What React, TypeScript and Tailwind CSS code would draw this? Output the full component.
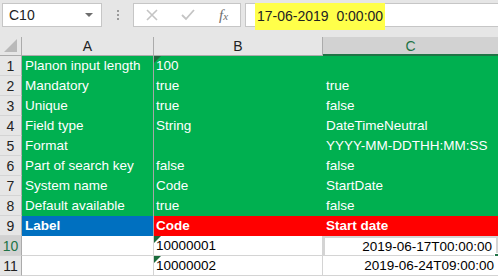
import React from "react";

const GREEN = "bg-[#00b050]";

type Row = { n: number; a: string; b: string; c: string; kind: "green" | "head" | "data"; tri?: boolean; sel?: boolean };

const rows: Row[] = [
  { n: 1, a: "Planon input length", b: "100", c: "", kind: "green", tri: true },
  { n: 2, a: "Mandatory", b: "true", c: "true", kind: "green" },
  { n: 3, a: "Unique", b: "true", c: "false", kind: "green" },
  { n: 4, a: "Field type", b: "String", c: "DateTimeNeutral", kind: "green" },
  { n: 5, a: "Format", b: "", c: "YYYY-MM-DDTHH:MM:SS", kind: "green" },
  { n: 6, a: "Part of search key", b: "false", c: "false", kind: "green" },
  { n: 7, a: "System name", b: "Code", c: "StartDate", kind: "green" },
  { n: 8, a: "Default available", b: "true", c: "false", kind: "green" },
  { n: 9, a: "Label", b: "Code", c: "Start date", kind: "head" },
  { n: 10, a: "", b: "10000001", c: "2019-06-17T00:00:00", kind: "data", tri: true, sel: true },
  { n: 11, a: "", b: "10000002", c: "2019-06-24T09:00:00", kind: "data", tri: true },
];

const Tri = () => (
  <svg className="absolute z-10 left-0 top-0" width="7" height="7" viewBox="0 0 7 7">
    <path d="M0 0 H7 L0 7 Z" fill="#1a6b3c" />
  </svg>
);

export default function App() {
  return (
    <div
      className="w-[498px] h-[276px] overflow-hidden bg-[#e6e6e6] text-[13.5px] leading-none"
      style={{ fontFamily: '"Liberation Sans", Arial, sans-serif' }}
    >
      {/* formula bar */}
      <div className="flex items-center h-[28px] pt-[2px] pl-[2px]">
        <div className="flex items-center justify-between w-[100px] h-[24px] bg-white border border-[#c6c6c6] pl-[6px] pr-[8px] text-[#222] text-[14px]">
          <span>C10</span>
          <span className="w-0 h-0 border-l-[4px] border-r-[4px] border-t-[4px] border-l-transparent border-r-transparent border-t-[#6d6d6d]" />
        </div>
        <div className="flex flex-col gap-[2px] ml-[15px] mr-[14px]">
          <span className="w-[2px] h-[2px] bg-[#9a9a9a]" />
          <span className="w-[2px] h-[2px] bg-[#9a9a9a]" />
          <span className="w-[2px] h-[2px] bg-[#9a9a9a]" />
        </div>
        <div className="flex items-center justify-around w-[108px] h-[24px] bg-white border border-[#c6c6c6]">
          <svg width="12" height="12" viewBox="0 0 12 12">
            <path d="M1 1 L11 11 M11 1 L1 11" stroke="#c4c4c4" strokeWidth="1.6" />
          </svg>
          <svg width="14" height="12" viewBox="0 0 14 12">
            <path d="M1 6 L5 10 L13 1" stroke="#c4c4c4" strokeWidth="1.8" fill="none" />
          </svg>
          <span className="italic text-[#6e6e6e] text-[15px]" style={{ fontFamily: '"Liberation Serif", serif' }}>
            f<span className="text-[11px]">x</span>
          </span>
        </div>
        <div className="flex items-center ml-[4px] flex-1 h-[24px] bg-white border border-[#c6c6c6] border-r-0">
          <span className="ml-[9px] px-[2px] h-[27px] mt-[2px] flex items-center bg-[#ffff4a] text-[#222] text-[14px] whitespace-pre">
            17-06-2019  0:00:00
          </span>
        </div>
      </div>

      {/* column headers */}
      <div className="flex mt-[9px] h-[19px] border-b border-[#ababab] text-[#222] text-[14px]">
        <div className="relative w-[22px] border-r border-[#ababab]">
          <span className="absolute right-[4px] bottom-[3px] w-0 h-0 border-l-[13px] border-l-transparent border-b-[13px] border-b-[#b9b9b9]" />
        </div>
        <div className="w-[132px] flex items-center justify-center border-r border-[#ababab]">A</div>
        <div className="w-[169px] flex items-center justify-center border-r border-[#ababab]">B</div>
        <div className="flex-1 flex items-center justify-center bg-[#d2d2d2] border-b-2 border-[#217346] text-[#217346] -mb-[1px]">
          C
        </div>
      </div>

      {/* rows */}
      {rows.map((r) => {
        const bg =
          r.kind === "green" ? GREEN : r.kind === "data" ? "bg-white" : "";
        const txt = r.kind === "data" ? "text-black" : "text-white";
        const bold = r.kind === "head" ? "font-bold" : "";
        const line = r.kind === "data" ? "border-b border-[#d4d4d4]" : "";
        return (
          <div key={r.n} className="flex h-[20px]">
            <div
              className={`w-[22px] flex items-center justify-center border-r border-[#ababab] border-b border-b-[#d4d4d4] text-[14px] ${
                r.sel ? "bg-[#d2d2d2] text-[#217346]" : "text-[#222]"
              }`}
            >
              {r.n}
            </div>
            <div
              className={`w-[132px] flex items-center pl-[3px] border-r border-[#a6a6a6] ${
                r.kind === "head" ? "bg-[#0070c0]" : bg
              } ${txt} ${bold} ${line}`}
            >
              {r.a}
            </div>
            <div
              className={`relative w-[169px] flex items-center pl-[2px] ${
                r.kind === "head" ? "bg-[#ff0000]" : bg
              } ${txt} ${bold} ${r.kind === "data" ? "border-r border-[#d4d4d4] border-b border-b-[#d4d4d4]" : ""}`}
            >
              {r.tri && <Tri />}
              {r.b}
            </div>
            <div
              className={`relative flex-1 flex items-center ${
                r.kind === "data" ? "justify-end pr-[4px]" : "pl-[3px]"
              } ${r.kind === "head" ? "bg-[#ff0000]" : bg} ${txt} ${bold} ${line} ${
                r.sel ? "bg-[#ffff3c] border-2 border-[#217346]" : ""
              }`}
            >
              {r.c}
              {r.sel && (
                <span className="absolute -right-[3px] -bottom-[3px] w-[5px] h-[5px] bg-[#217346] border border-white" />
              )}
            </div>
          </div>
        );
      })}
    </div>
  );
}
